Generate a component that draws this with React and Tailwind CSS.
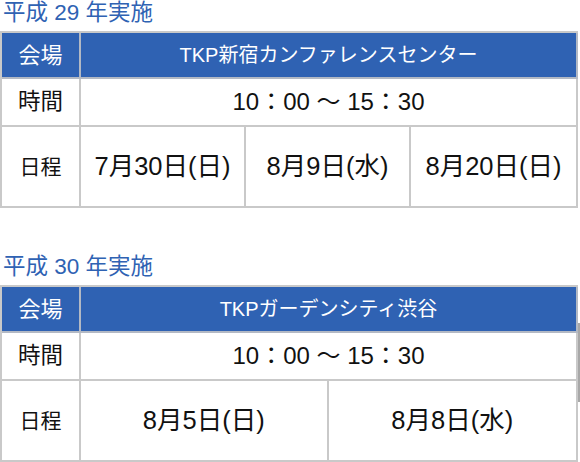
import React from "react";

const font = { fontFamily: '"Liberation Sans", "Noto Sans CJK JP", sans-serif' };

const Schedule = ({ title, venue, time, dates, className }) => {
  const cols = dates.length === 3 ? "grid-cols-3" : "grid-cols-2";
  return (
    <section className={className}>
      <h2 className="text-[22.5px] leading-[26px] text-[#2f62b3] pl-[3px] mb-[5px]">{title}</h2>
      <div className="grid grid-cols-[79px_1fr] border-t-2 border-l-2 border-[#c9c9c9] text-[#111]">
        <div className="h-[46px] flex items-center justify-center bg-[#2f62b3] text-white text-[22px] border-r-2 border-b-2 border-[#b3b9c4]">
          会場
        </div>
        <div className="h-[46px] flex items-center justify-center bg-[#2f62b3] text-white text-[20px] border-r-2 border-b-2 border-[#b3b9c4]">
          {venue}
        </div>
        <div className="h-[48px] flex items-center justify-center text-[22.5px] border-r-2 border-b-2 border-[#c9c9c9]">
          時間
        </div>
        <div className="h-[48px] flex items-center justify-center text-[24px] border-r-2 border-b-2 border-[#c9c9c9]">
          {time}
        </div>
        <div className="h-[81px] flex items-center justify-center text-[21px] border-r-2 border-b-2 border-[#c9c9c9]">
          日程
        </div>
        <div className={`h-[81px] grid ${cols} border-r-2 border-b-2 border-[#c9c9c9]`}>
          {dates.map((d, i) => (
            <div
              key={d}
              className={
                i < dates.length - 1
                  ? "flex items-center justify-center text-[25.5px] border-r-2 border-[#c9c9c9]"
                  : "flex items-center justify-center text-[25.5px]"
              }
            >
              {d}
            </div>
          ))}
        </div>
      </div>
    </section>
  );
};

export default function App() {
  return (
    <div className="relative w-[580px] h-[462px] bg-white overflow-hidden" style={font}>
      <div className="w-[578px]">
        <Schedule
          title="平成 29 年実施"
          venue="TKP新宿カンファレンスセンター"
          time="10：00 〜 15：30"
          dates={["7月30日(日)", "8月9日(水)", "8月20日(日)"]}
        />
        <Schedule
          className="mt-[46px]"
          title="平成 30 年実施"
          venue="TKPガーデンシティ渋谷"
          time="10：00 〜 15：30"
          dates={["8月5日(日)", "8月8日(水)"]}
        />
      </div>
      <div className="absolute right-0 top-[323px] w-[2px] h-[79px] bg-[#a8a8a8]" />
    </div>
  );
}
